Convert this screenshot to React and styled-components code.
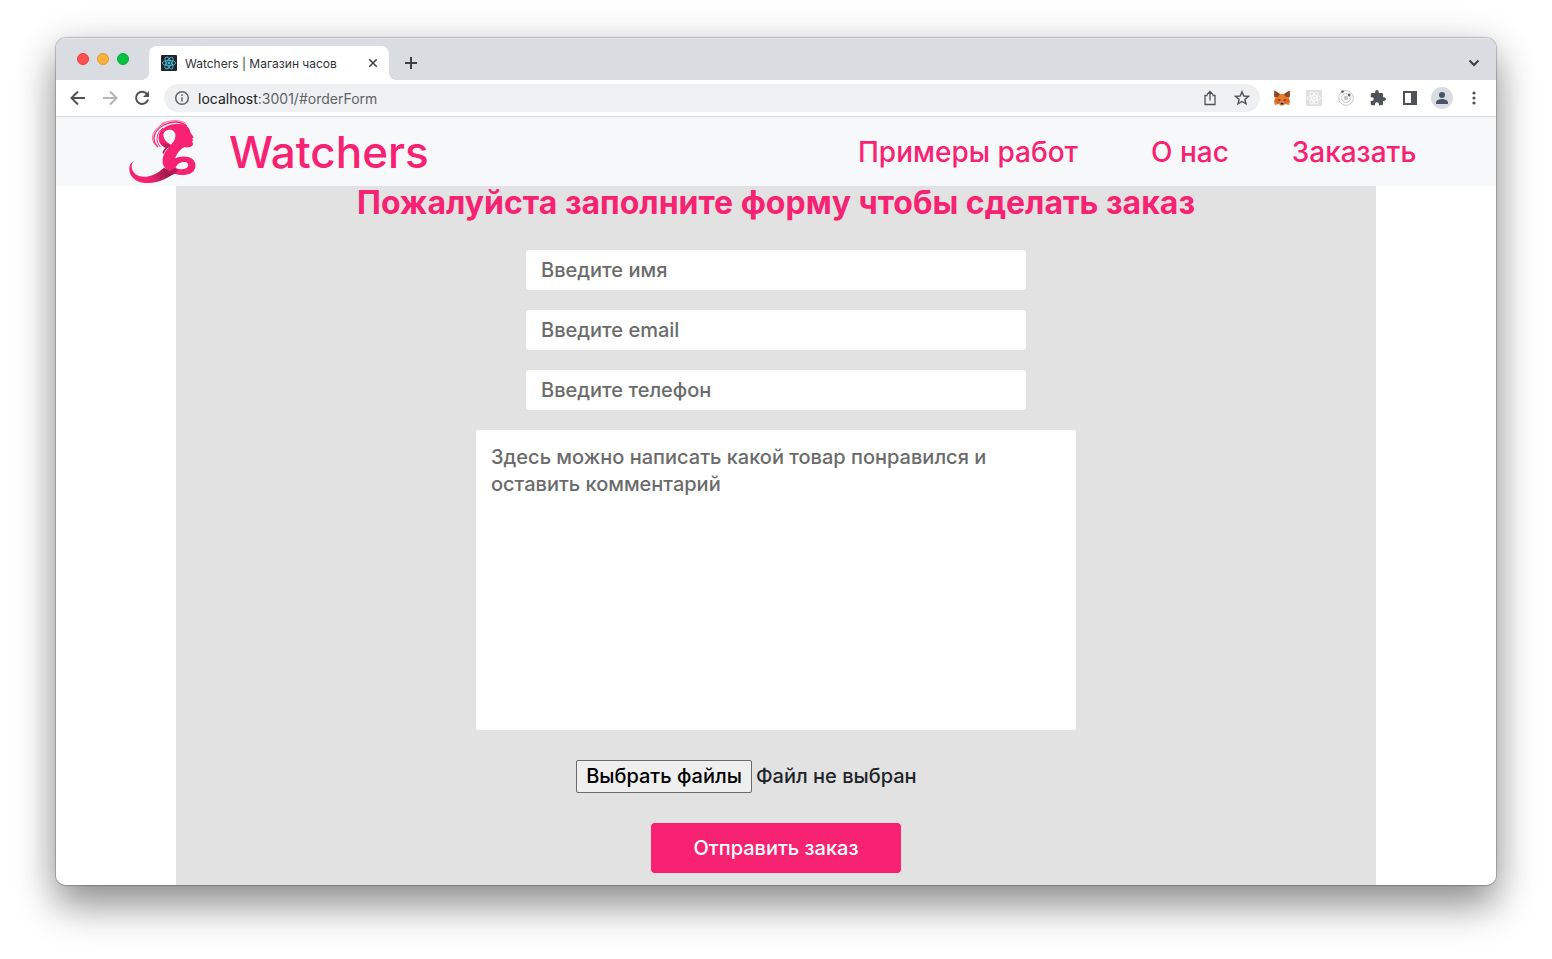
import React, { useRef, useState } from "react";
import styled, { createGlobalStyle } from "styled-components";

const GlobalStyle = createGlobalStyle`
  *, *::before, *::after { box-sizing: border-box; }
  body { margin: 0; background: #fff; font-family: Inter, "Noto Sans", sans-serif; }
  button, input, textarea { font: inherit; }
`;

const Desktop = styled.div`
  height: 100vh;
  padding: 38px 56px 74px;
  overflow: hidden;
`;

const Window = styled.div`
  display: flex;
  flex-direction: column;
  height: 100%;
  overflow: hidden;
  border-radius: 10px;
  background: #fff;
  box-shadow: 0 0 1px 1px rgba(0, 0, 0, 0.22), 0 22px 38px rgba(0, 0, 0, 0.36), 0 6px 40px rgba(0, 0, 0, 0.16);
`;

const TabStrip = styled.div`
  display: flex;
  flex: none;
  align-items: flex-end;
  height: 42px;
  padding: 0 12px 0 21px;
  background: #d9dce1;
  box-shadow: inset 0 1px 0 #e6e8eb;
`;

const Lights = styled.div`
  display: flex;
  align-self: center;
  gap: 8px;
  width: 72px;
`;

const Light = styled.button`
  width: 12px;
  height: 12px;
  padding: 0;
  border: 1px solid ${(p) => p.$edge};
  border-radius: 50%;
  background: ${(p) => p.$fill};
`;

const Tab = styled.div`
  position: relative;
  display: flex;
  align-items: center;
  width: 240px;
  height: 34px;
  padding: 0 10px 0 12px;
  border-radius: 8px 8px 0 0;
  background: #fff;
  font-size: 12px;
  color: #303438;

  &::before,
  &::after {
    content: "";
    position: absolute;
    bottom: 0;
    width: 8px;
    height: 8px;
  }
  &::before {
    right: 100%;
    background: radial-gradient(circle at 0 0, transparent 8px, #fff 8px);
  }
  &::after {
    left: 100%;
    background: radial-gradient(circle at 100% 0, transparent 8px, #fff 8px);
  }
`;

const TabTitle = styled.span`
  flex: 1;
  padding-left: 8px;
  white-space: nowrap;
`;

const IconButton = styled.button`
  display: grid;
  flex: none;
  place-items: center;
  width: ${(p) => p.$size || 32}px;
  height: ${(p) => p.$size || 32}px;
  padding: 0;
  border: 0;
  border-radius: 50%;
  background: transparent;
  color: ${(p) => p.$color || "#4f5358"};
`;

const NewTab = styled.div`
  display: flex;
  flex: 1;
  align-items: center;
  justify-content: space-between;
  height: 34px;
  padding-left: 12px;
`;

const Toolbar = styled.div`
  display: flex;
  flex: none;
  align-items: center;
  height: 37px;
  padding: 0 6px;
  border-bottom: 1px solid #d5d7da;
`;

const AddressBar = styled.div`
  display: flex;
  flex: 1;
  align-items: center;
  height: 28px;
  margin: 0 6px;
  padding: 0 2px 0 10px;
  border-radius: 14px;
  background: #eff0f2;
  font-size: 14px;
  color: #5f6368;
`;

const Url = styled.span`
  flex: 1;
  padding-left: 8px;
`;

const Host = styled.span`
  color: #202124;
`;

const Page = styled.div`
  flex: 1;
  min-height: 0;
  overflow: hidden;
  background: #fff;
  font-weight: 500;
`;

const Header = styled.header`
  display: flex;
  align-items: center;
  justify-content: space-between;
  height: 69px;
  padding: 0 64px 0 72px;
  background: #f7f8fa;
  color: #f72271;
`;

const Brand = styled.a`
  display: flex;
  align-items: center;
  gap: 32px;
  color: inherit;
  font-size: 44px;
  line-height: 60px;
  text-decoration: none;
`;

const Nav = styled.nav`
  display: flex;
`;

const NavLink = styled.a`
  width: ${(p) => p.$width}px;
  color: inherit;
  font-size: 28px;
  line-height: 36px;
  text-align: center;
  text-decoration: none;
  white-space: nowrap;
`;

const Order = styled.main`
  max-width: 1200px;
  min-height: 100%;
  margin: 0 auto;
  background: #e2e2e2;
`;

const Title = styled.h1`
  margin: 0;
  color: #f72271;
  font-size: 32px;
  font-weight: 700;
  line-height: 34px;
  text-align: center;
`;

const Form = styled.form`
  display: flex;
  flex-direction: column;
  align-items: center;
  gap: 20px;
  padding: 30px 20px;
  font-size: 20px;
  line-height: 27px;
`;

const Field = styled.input`
  width: 100%;
  max-width: 500px;
  height: 40px;
  padding: 0 15px;
  border: 0;
  border-radius: 3px;
  background: #fff;
  &::placeholder { color: #6b6b6b; opacity: 1; }
`;

const Comment = styled.textarea`
  width: 100%;
  max-width: 600px;
  height: 300px;
  padding: 14px 15px;
  border: 0;
  border-radius: 3px;
  background: #fff;
  resize: none;
  &::placeholder { color: #6b6b6b; opacity: 1; }
`;

const FileRow = styled.div`
  display: flex;
  align-items: center;
  gap: 4px;
  width: 100%;
  max-width: 400px;
  margin: 10px 0;
  color: #212529;
`;

const FileButton = styled.button`
  min-width: 176px;
  height: 33px;
  padding: 0 7px;
  border: 1px solid #6b6b6b;
  border-radius: 2px;
  background: #efefef;
  color: #000;
`;

const Submit = styled.button`
  width: 250px;
  height: 50px;
  border: 0;
  border-radius: 4px;
  background: #f72271;
  color: #fff;
`;

const Stroke = ({ size = 16, width = 2, children }) => (
  <svg width={size} height={size} viewBox="0 0 16 16" fill="none" stroke="currentColor" strokeWidth={width} aria-hidden="true">
    {children}
  </svg>
);

const Atom = ({ bg, color }) => (
  <svg width="16" height="16" viewBox="0 0 16 16" aria-hidden="true">
    <rect width="16" height="16" rx="1" fill={bg} />
    <g fill="none" stroke={color} strokeWidth="0.9">
      <ellipse cx="8" cy="8" rx="6.6" ry="2.6" />
      <ellipse cx="8" cy="8" rx="6.6" ry="2.6" transform="rotate(60 8 8)" />
      <ellipse cx="8" cy="8" rx="6.6" ry="2.6" transform="rotate(120 8 8)" />
    </g>
    <circle cx="8" cy="8" r="1.4" fill={color} />
  </svg>
);

const Fox = () => (
  <svg width="16" height="16" viewBox="0 0 16 16" aria-hidden="true">
    <path d="M.5.500L6 4h4l5.500-3.500.5 5-1 3 1 3-1 3.500-4-1-1.500 1.500h-3L5 14l-4 1-1-3.500 1-3-1-3z" fill="#ea7a30" />
    <path d="M.5.500L6 4 4 7H.5L0 5zM15.500.500L10 4l2 3h3.500l.5-2z" fill="#8a4a26" />
    <path d="M1 9h4l1 5-5-2zM15 9h-4l-1 5 5-2z" fill="#df6420" />
    <path d="M3.800 9l2.600.8v1.200L4.500 10.600zM12.200 9l-2.600.8v1.200l1.900-.4z" fill="#493a34" />
    <path d="M5.500 13l1-.5h3l1 .5-1.500 2.500H7z" fill="#d0b7aa" />
    <path d="M6.700 12.800h2.600l.3 1.600H6.400z" fill="#2b1c18" />
  </svg>
);

const Orbit = () => (
  <svg width="16" height="16" viewBox="0 0 16 16" fill="none" aria-hidden="true">
    <circle cx="8" cy="8" r="7.3" stroke="#b9b9b9" strokeWidth="0.8" />
    <circle cx="8" cy="8" r="4.4" stroke="#b9b9b9" strokeWidth="0.8" />
    <circle cx="8" cy="8" r="2.2" fill="#c4c4c4" />
    <circle cx="4.5" cy="1.6" r="1.4" fill="#686868" />
    <circle cx="11.2" cy="5" r="1.4" fill="#686868" />
  </svg>
);

const Logo = () => (
  <svg width="69" height="66" viewBox="54 20 207 198" aria-hidden="true">
    <defs>
      <linearGradient id="tail" gradientUnits="userSpaceOnUse" x1="115" y1="205" x2="178" y2="172">
        <stop offset="0" stopColor="#f72271" />
        <stop offset="1" stopColor="#8f1748" />
      </linearGradient>
      <linearGradient id="strand" gradientUnits="userSpaceOnUse" x1="150" y1="84" x2="178" y2="110">
        <stop offset="0" stopColor="#f72271" />
        <stop offset="1" stopColor="#a01a50" />
      </linearGradient>
    </defs>
    <g fill="none" stroke="#f72271" strokeLinecap="round">
      <path d="M143 103C124 84 130 54 162 38C188 25 212 28 229 40" strokeWidth="4" />
      <path d="M134 96C117 74 134 44 166 32" strokeWidth="2" />
      <path d="M155 34C180 22 208 22 226 32" strokeWidth="2" />
      <path d="M150 103C134 84 140 62 158 48" strokeWidth="3" />
    </g>
    <path
      d="M74 146C62 150 62 172 75 184C95 201 132 194 162 166L194 182C165 205 135 213 105 212C75 210 56 190 58 168C59 155 66 148 74 146Z"
      fill="url(#tail)"
    />
    <path
      fillRule="evenodd"
      d="M146 80C143 52 170 36 200 34C225 34 240 44 241 60L251 75L247 79L249 84L246 88L249 93C249 106 236 106 222 105C210 112 200 124 195 138C208 131 234 129 247 140C262 152 258 175 243 183C225 191 203 189 187 182C168 174 156 162 158 142C159 126 168 114 176 106C163 108 147 96 146 80ZM180 52C165 52 158 62 161 73C163 84 174 92 183 97C192 88 198 78 196 66C194 57 188 52 180 52ZM197 168C199 155 212 148 224 149C237 150 238 162 228 168C218 173 206 171 197 168Z"
      fill="#f72271"
    />
    <path d="M148 84C154 90 166 94 182 98C171 107 164 116 160 126C155 119 162 111 166 106C157 103 150 96 148 84Z" fill="url(#strand)" />
    <path d="M170 180C184 176 187 168 197 168L204 172C200 179 195 184 187 188Z" fill="#b51b58" />
  </svg>
);

const lights = [
  ["Закрыть", "#fe5150", "#e5403f"],
  ["Свернуть", "#fdb03a", "#e39a2b"],
  ["Развернуть", "#05c341", "#05ad39"],
];

const links = [
  ["Примеры работ", "#examples", 272],
  ["О нас", "#about", 172],
  ["Заказать", "#orderForm", 156],
];

const fields = [
  ["name", "text", "Введите имя"],
  ["email", "email", "Введите email"],
  ["phone", "tel", "Введите телефон"],
];

export default function App() {
  const picker = useRef(null);
  const [files, setFiles] = useState("");

  return (
    <Desktop>
      <GlobalStyle />
      <Window>
        <TabStrip>
          <Lights>
            {lights.map(([label, fill, edge]) => (
              <Light key={label} aria-label={label} $fill={fill} $edge={edge} />
            ))}
          </Lights>
          <Tab>
            <Atom bg="#20232a" color="#49b7d3" />
            <TabTitle>Watchers | Магазин часов</TabTitle>
            <IconButton aria-label="Закрыть вкладку" $size={12} $color="#3c4043">
              <Stroke size={12}><path d="M3 3l10 10M13 3L3 13" /></Stroke>
            </IconButton>
          </Tab>
          <NewTab>
            <IconButton aria-label="Новая вкладка" $size={20} $color="#3c4043">
              <Stroke><path d="M8 2v12M2 8h12" /></Stroke>
            </IconButton>
            <IconButton aria-label="Поиск вкладок" $size={20} $color="#3c4043">
              <Stroke><path d="M3.500 5.500L8 10l4.500-4.500" /></Stroke>
            </IconButton>
          </NewTab>
        </TabStrip>

        <Toolbar>
          <IconButton aria-label="Назад">
            <Stroke><path d="M15 8H2M8 1.500L1.500 8L8 14.500" /></Stroke>
          </IconButton>
          <IconButton aria-label="Вперёд" $color="#b3b5b8">
            <Stroke><path d="M1 8H14M8 1.500L14.500 8L8 14.500" /></Stroke>
          </IconButton>
          <IconButton aria-label="Обновить">
            <Stroke>
              <path d="M13.300 4.500A6.100 6.100 0 1 0 14 9.500" />
              <path d="M15 1v6H9z" fill="currentColor" stroke="none" />
            </Stroke>
          </IconButton>
          <AddressBar>
            <Stroke width={1.5}><circle cx="8" cy="8" r="6.300" /><path d="M8 7.200v4.300M8 4.300v1.700" /></Stroke>
            <Url><Host>localhost</Host>:3001/#orderForm</Url>
            <IconButton aria-label="Поделиться">
              <Stroke width={1.3}><path d="M5.500 5.500H3v9h10v-9h-2.500M8 10.500V2M5 4.500L8 1.500L11 4.500" /></Stroke>
            </IconButton>
            <IconButton aria-label="В закладки">
              <Stroke width={1.4}><path d="M8 1.800l1.800 4.200 4.600.4-3.500 3 1.100 4.500L8 11.500 4 13.900l1.100-4.500-3.500-3L6.200 6z" /></Stroke>
            </IconButton>
          </AddressBar>
          <IconButton aria-label="MetaMask"><Fox /></IconButton>
          <IconButton aria-label="React DevTools"><Atom bg="#e0e0e0" color="#fafafa" /></IconButton>
          <IconButton aria-label="Orbit"><Orbit /></IconButton>
          <IconButton aria-label="Расширения">
            <svg width="16" height="16" viewBox="1 1 22 22" fill="currentColor" aria-hidden="true">
              <path d="M20.500 11H19V7c0-1.100-.9-2-2-2h-4V3.500a2.500 2.500 0 0 0-5 0V5H4c-1.100 0-2 .9-2 2v3.800h1.500a2.700 2.700 0 0 1 0 5.400H2V20c0 1.100.9 2 2 2h3.800v-1.500a2.700 2.700 0 0 1 5.400 0V22H17c1.100 0 2-.9 2-2v-4h1.500a2.500 2.500 0 0 0 0-5z" />
            </svg>
          </IconButton>
          <IconButton aria-label="Боковая панель">
            <Stroke><path d="M2 2h12v12H2z" /><path d="M10 2h4v12h-4z" fill="currentColor" /></Stroke>
          </IconButton>
          <IconButton aria-label="Профиль">
            <svg width="22" height="22" viewBox="0 0 22 22" aria-hidden="true">
              <circle cx="11" cy="11" r="11" fill="#d9dce1" />
              <circle cx="11" cy="8" r="3" fill="#4a5469" />
              <path d="M5 17v-1.500c0-2.500 4-3.500 6-3.500s6 1 6 3.500V17z" fill="#4a5469" />
            </svg>
          </IconButton>
          <IconButton aria-label="Меню">
            <svg width="16" height="16" viewBox="0 0 16 16" fill="currentColor" aria-hidden="true">
              <circle cx="8" cy="3" r="1.600" /><circle cx="8" cy="8" r="1.600" /><circle cx="8" cy="13" r="1.600" />
            </svg>
          </IconButton>
        </Toolbar>

        <Page>
          <Header>
            <Brand href="#home"><Logo />Watchers</Brand>
            <Nav>
              {links.map(([text, href, width]) => (
                <NavLink key={href} href={href} $width={width}>{text}</NavLink>
              ))}
            </Nav>
          </Header>
          <Order id="orderForm">
            <Title>Пожалуйста заполните форму чтобы сделать заказ</Title>
            <Form onSubmit={(e) => e.preventDefault()}>
              {fields.map(([name, type, hint]) => (
                <Field key={name} name={name} type={type} placeholder={hint} aria-label={hint} />
              ))}
              <Comment
                name="comment"
                aria-label="Комментарий"
                placeholder="Здесь можно написать какой товар понравился и оставить комментарий"
              />
              <FileRow>
                <input
                  ref={picker}
                  type="file"
                  multiple
                  hidden
                  aria-label="Выбрать файлы"
                  onChange={(e) => setFiles(Array.from(e.target.files, (f) => f.name).join(", "))}
                />
                <FileButton type="button" onClick={() => picker.current.click()}>Выбрать файлы</FileButton>
                <span>{files || "Файл не выбран"}</span>
              </FileRow>
              <Submit type="submit">Отправить заказ</Submit>
            </Form>
          </Order>
        </Page>
      </Window>
    </Desktop>
  );
}
